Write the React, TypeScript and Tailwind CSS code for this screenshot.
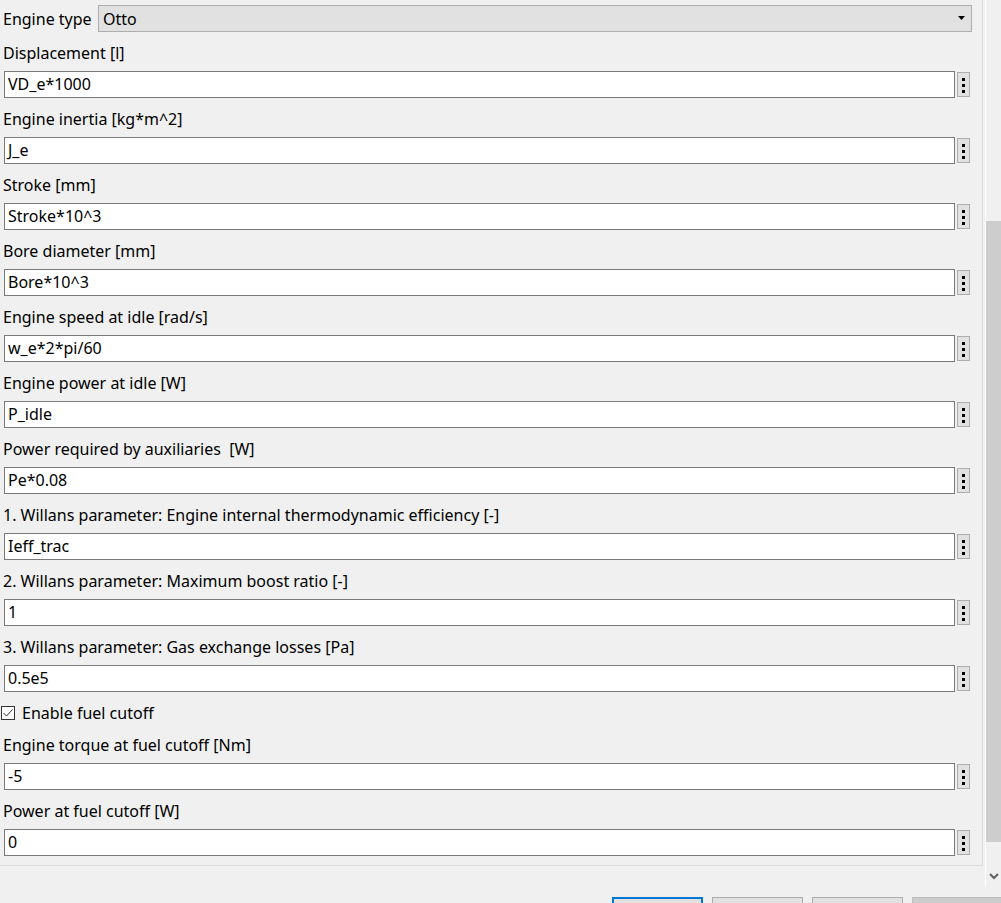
import React from "react";

const fields1: [string, string][] = [
  ["Displacement [l]", "VD_e*1000"],
  ["Engine inertia [kg*m^2]", "J_e"],
  ["Stroke [mm]", "Stroke*10^3"],
  ["Bore diameter [mm]", "Bore*10^3"],
  ["Engine speed at idle [rad/s]", "w_e*2*pi/60"],
  ["Engine power at idle [W]", "P_idle"],
  ["Power required by auxiliaries  [W]", "Pe*0.08"],
  ["1. Willans parameter: Engine internal thermodynamic efficiency [-]", "Ieff_trac"],
  ["2. Willans parameter: Maximum boost ratio [-]", "1"],
  ["3. Willans parameter: Gas exchange losses [Pa]", "0.5e5"],
];

const fields2: [string, string][] = [
  ["Engine torque at fuel cutoff [Nm]", "-5"],
  ["Power at fuel cutoff [W]", "0"],
];

function Field({ label, value }: { label: string; value: string }) {
  return (
    <div className="flex flex-col">
      <div className="mt-[10px] h-[22px] leading-[22px] pl-[3px] whitespace-pre">{label}</div>
      <div className="mt-[7px] flex">
        <div className="ml-[4px] w-[951px] h-[27px] bg-white border border-[#7a7a7a] pl-[3px] leading-[25px] whitespace-pre">
          {value}
        </div>
        <div className="ml-[2px] mt-[1px] w-[13px] h-[25px] bg-[#e1e1e1] border border-[#adadad] flex flex-col items-center pt-[5px] gap-[3px]">
          <div className="w-[3px] h-[3px] bg-black" />
          <div className="w-[3px] h-[3px] bg-black" />
          <div className="w-[3px] h-[3px] bg-black" />
        </div>
      </div>
    </div>
  );
}

export default function App() {
  return (
    <div className="w-[1001px] h-[903px] bg-[#f0f0f0] overflow-hidden flex flex-col text-[16px] text-black font-['Noto_Sans',sans-serif]">
      <div className="flex h-[887px] shrink-0">
        <div className="w-[983px] self-start border-r border-b border-[#dcdcdc] pt-[5px] pb-[9px] flex flex-col">
          <div className="flex items-center h-[27px]">
            <div className="pl-[3px] w-[98px] whitespace-pre">Engine type</div>
            <div className="w-[874px] h-[27px] bg-[#e1e1e1] border border-[#adadad] flex items-center pl-[4px] pr-[5px]">
              <span className="flex-1">Otto</span>
              <svg width="8" height="5" viewBox="0 0 8 5" className="mr-[0px]">
                <path d="M0 0 H7 L3.5 4 Z" fill="#000" />
              </svg>
            </div>
          </div>
          {fields1.map(([l, v]) => (
            <Field key={l} label={l} value={v} />
          ))}
          <div className="mt-[10px] h-[22px] flex items-center">
            <div className="ml-[1px] w-[14px] h-[14px] border border-[#333333] bg-white flex items-center justify-center">
              <svg width="12" height="12" viewBox="0 0 12 12">
                <path d="M1.5 6 L4.5 9 L10.5 2.5" fill="none" stroke="#333" strokeWidth="1" />
              </svg>
            </div>
            <span className="ml-[7px]">Enable fuel cutoff</span>
          </div>
          {fields2.map(([l, v]) => (
            <Field key={l} label={l} value={v} />
          ))}
        </div>
        <div className="ml-[2px] w-[16px] h-[887px] border-l border-white flex flex-col">
          <div className="h-[221px]" />
          <div className="h-[621px] bg-[#cdcdcd]" />
          <div className="flex-1 flex items-end justify-center pb-[7px]">
            <svg width="10" height="7" viewBox="0 0 10 7">
              <path d="M1 1 L5 5 L9 1" fill="none" stroke="#606060" strokeWidth="2" />
            </svg>
          </div>
        </div>
      </div>
      <div className="mt-[10px] flex ml-[612px] gap-[9px]">
        <div className="w-[91px] h-[24px] shrink-0 bg-[#e1e1e1] border-2 border-[#0078d7]" />
        <div className="w-[91px] h-[24px] shrink-0 bg-[#e1e1e1] border border-[#adadad]" />
        <div className="w-[91px] h-[24px] shrink-0 bg-[#e1e1e1] border border-[#adadad]" />
        <div className="w-[91px] h-[24px] shrink-0 bg-[#cccccc] border border-[#bfbfbf]" />
      </div>
    </div>
  );
}
